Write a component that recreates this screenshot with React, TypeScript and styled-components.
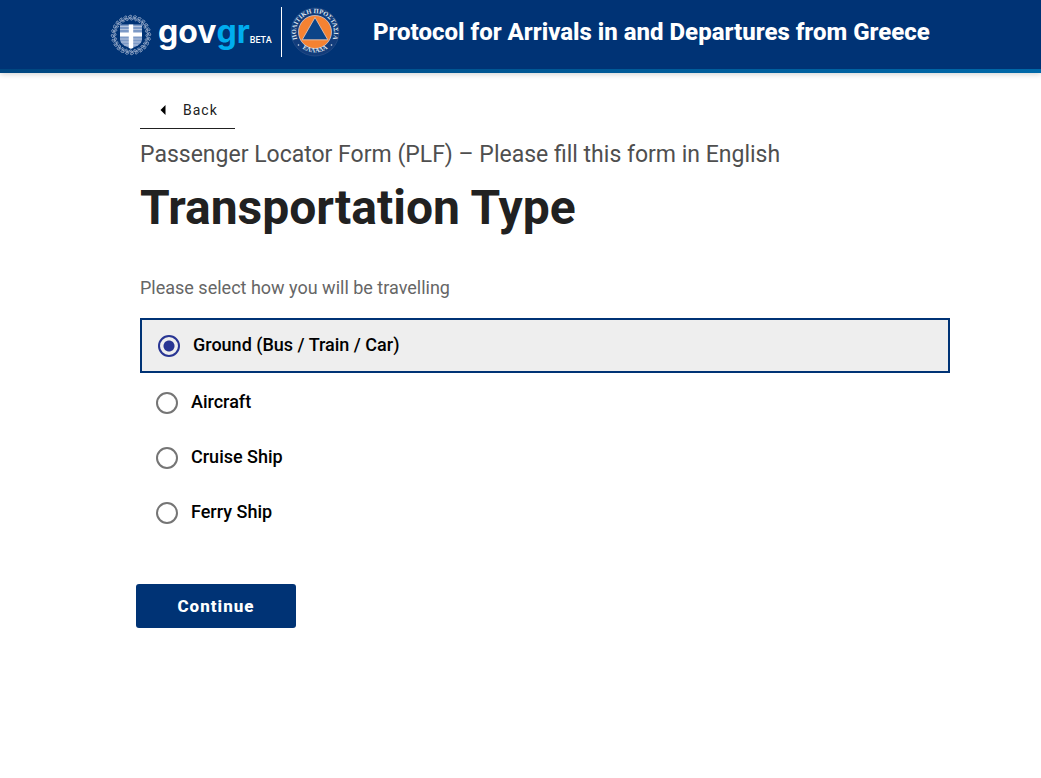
import React, { useState } from "react";
import styled, { createGlobalStyle } from "styled-components";

const navy = "#003375";

const GlobalStyle = createGlobalStyle`
  *, *::before, *::after { box-sizing: border-box; }
  body {
    margin: 0;
    background: #fff;
    color: #212121;
    font-family: Roboto, "Liberation Sans", sans-serif;
  }
`;

const Header = styled.header`
  background: ${navy};
  box-shadow: 0 1px 6px rgba(0, 0, 0, 0.2);
`;

const HeaderRow = styled.div`
  display: flex;
  align-items: flex-start;
  height: 69px;
  padding: 7px 16px 0 110px;
`;

const HeaderStripe = styled.div`
  height: 4px;
  background: linear-gradient(90deg, #004680, #0068a8);
`;

const Brand = styled.a`
  display: flex;
  align-items: flex-start;
  color: #fff;
  text-decoration: none;
`;

const Emblem = styled.svg`
  width: 42px;
  height: 42px;
  margin-top: 7px;
`;

const Wordmark = styled.span`
  display: flex;
  align-items: baseline;
  width: 119px;
  padding-left: 6px;
  font: 700 32px/50px Inter, sans-serif;
`;

const WordmarkAccent = styled.span`
  color: #00adef;
`;

const Beta = styled.small`
  font: 500 9px/12px Roboto, sans-serif;
`;

const Divider = styled.span`
  width: 1px;
  height: 50px;
  margin: 0 8px 0 10px;
  background: #fff;
`;

const Seal = styled.svg`
  width: 50px;
  height: 50px;
`;

const ServiceTitle = styled.h2`
  margin: 9px 0 0 33px;
  font-size: 24px;
  line-height: 32px;
  font-weight: 800;
  color: #fff;
`;

const Main = styled.main`
  padding: 19px 91px 40px 140px;
`;

const BackButton = styled.button`
  display: flex;
  align-items: center;
  gap: 17px;
  height: 37px;
  padding: 0 17px 0 20px;
  border: 0;
  border-bottom: 1px solid #212121;
  background: none;
  color: #212121;
  font: 400 14px/20px Roboto, sans-serif;
  letter-spacing: 1px;
  cursor: pointer;
`;

const BackArrow = styled.svg`
  width: 6px;
  height: 10px;
`;

const Caption = styled.p`
  margin: 10px 0 0;
  font-size: 23px;
  line-height: 32px;
  color: #4f4f4f;
`;

const Title = styled.h1`
  margin: 9px 0 0;
  font-size: 48px;
  line-height: 56px;
  font-weight: 700;
`;

const Options = styled.fieldset`
  display: flex;
  flex-direction: column;
  margin: 40px 0 0;
  padding: 0;
  border: 0;
`;

const Legend = styled.legend`
  padding: 0 0 18px;
  font-size: 18px;
  line-height: 24px;
  color: #666;
`;

const Option = styled.label<{ $selected: boolean }>`
  display: flex;
  align-items: center;
  gap: 13px;
  height: 55px;
  margin-bottom: ${(p) => (p.$selected ? "2px" : "0")};
  padding: 0 16px;
  border: ${(p) => (p.$selected ? `2px solid ${navy}` : "0")};
  background: ${(p) => (p.$selected ? "#eee" : "transparent")};
  color: #000;
  font-size: 18px;
  line-height: 24px;
  font-weight: 500;
  cursor: pointer;
`;

const Radio = styled.input`
  appearance: none;
  width: 22px;
  height: 22px;
  margin: 0;
  border: 2px solid #757575;
  border-radius: 50%;
  cursor: pointer;

  &:checked {
    border-color: #283593;
    background: radial-gradient(circle, #283593 5px, transparent 6px);
  }
`;

const OptionText = styled.span`
  padding-bottom: 2px;
`;

const ContinueButton = styled.button`
  min-width: 160px;
  height: 44px;
  margin: 44px 0 0 -4px;
  border: 0;
  border-radius: 3px;
  background: ${navy};
  color: #fff;
  font: 800 17px/24px Roboto, sans-serif;
  letter-spacing: 1px;
  cursor: pointer;
`;

const leaves = Array.from({ length: 24 }, (_, i) => i * 15);

const StateEmblem = () => (
  <Emblem viewBox="0 0 42 42" aria-hidden="true">
    <circle cx="21" cy="21" r="17" fill="none" stroke="#8199c0" strokeWidth="0.8" />
    {leaves.map((a) => (
      <g key={a} transform={`rotate(${a} 21 21)`} fill="none" stroke="#a9b9d3" strokeWidth="0.7">
        <ellipse cx="20" cy="2.4" rx="1.7" ry="0.9" transform="rotate(-25 20 2.4)" />
        <ellipse cx="21" cy="5" rx="1.6" ry="0.8" transform="rotate(30 21 5)" />
      </g>
    ))}
    <path d="M10 10.500h22v14.500c0 5-4.500 7-11 9.500C14.500 32 10 30 10 25z" fill="#7c99c6" />
    <path d="M10 12.500h22M10 15.500h22M10 25h22M11 28h20M14 31h14" stroke="#b4c4dd" strokeWidth="1.200" />
    <path d="M18.800 10.500h4.400v8H32v4h-8.800V34l-2.200.8-2.200-.8V22.500H10v-4h8.800z" fill="#fff" />
  </Emblem>
);

const CivilProtectionSeal = () => (
  <Seal viewBox="0 0 50 50" aria-hidden="true">
    <defs>
      <path id="seal-top" d="M8.500 34.500A19 19 0 1 1 41.500 34.500" />
      <path id="seal-bottom" d="M6 34.500A22 22 0 0 0 44 34.500" />
    </defs>
    <circle cx="25" cy="25" r="24" fill="#123c7b" stroke="#2f548c" strokeWidth="0.6" />
    <circle cx="25" cy="25" r="16.500" fill="#f58232" stroke="#c9cbd8" strokeWidth="0.8" />
    <path d="M25 10.500 37.800 32.800H12.200z" fill="#0c4488" stroke="#e9cdbf" strokeWidth="0.8" />
    <g fill="#dfe6f0" fontFamily="Liberation Serif, serif" fontWeight="700" fontSize="6.500" textAnchor="middle">
      <text>
        <textPath href="#seal-top" startOffset="50%">ΠΟΛΙΤΙΚΗ ΠΡΟΣΤΑΣΙΑ</textPath>
      </text>
      <text>
        <textPath href="#seal-bottom" startOffset="50%">ΕΛΛΑΔΑ</textPath>
      </text>
    </g>
    <circle cx="8.500" cy="38" r="0.800" fill="#dfe6f0" />
    <circle cx="41.500" cy="38" r="0.800" fill="#dfe6f0" />
  </Seal>
);

const choices = ["Ground (Bus / Train / Car)", "Aircraft", "Cruise Ship", "Ferry Ship"];

export default function App() {
  const [selected, setSelected] = useState(choices[0]);
  return (
    <>
      <GlobalStyle />
      <Header>
        <HeaderRow>
          <Brand href="#">
            <StateEmblem />
            <Wordmark>
              gov<WordmarkAccent>gr</WordmarkAccent>
              <Beta>BETA</Beta>
            </Wordmark>
            <Divider />
            <CivilProtectionSeal />
          </Brand>
          <ServiceTitle>Protocol for Arrivals in and Departures from Greece</ServiceTitle>
        </HeaderRow>
        <HeaderStripe />
      </Header>
      <Main>
        <BackButton type="button">
          <BackArrow viewBox="0 0 6 10" aria-hidden="true">
            <path d="M5.500 0v10L0.500 5z" fill="#000" />
          </BackArrow>
          Back
        </BackButton>
        <Caption>Passenger Locator Form (PLF) – Please fill this form in English</Caption>
        <Title>Transportation Type</Title>
        <Options>
          <Legend>Please select how you will be travelling</Legend>
          {choices.map((choice) => (
            <Option key={choice} $selected={choice === selected}>
              <Radio
                type="radio"
                name="transport"
                checked={choice === selected}
                onChange={() => setSelected(choice)}
              />
              <OptionText>{choice}</OptionText>
            </Option>
          ))}
        </Options>
        <ContinueButton type="button">Continue</ContinueButton>
      </Main>
    </>
  );
}
